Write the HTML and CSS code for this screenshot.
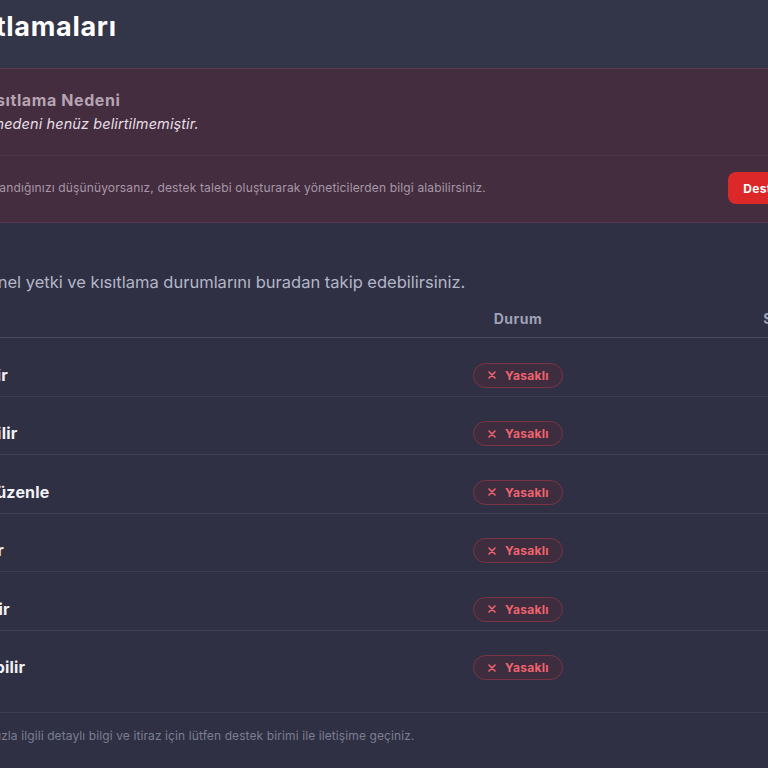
FILE: index.html
```html
<!DOCTYPE html>
<html lang="tr">

<head>
    <meta charset="UTF-8">
    <meta name="viewport" content="width=device-width, initial-scale=1.0">
    <title>Kanal Kısıtlamaları</title>
    <link rel="stylesheet" href="styles.css">
</head>

<body>
    <div class="page">
        <!-- baslik -->
        <div class="page-head">
            <h1>Kanal Kısıtlamaları</h1>
        </div>

        <!-- kisitlama uyarisi -->
        <div class="alert">
            <div class="alert-body">
                <svg class="alert-icon" width="30" height="30" viewBox="0 0 30 30">
                    <circle cx="15" cy="15" r="13" fill="none" stroke="#e05563" stroke-width="2" />
                    <path d="M15 8v9M15 21v1" stroke="#e05563" stroke-width="2.4" stroke-linecap="round" />
                </svg>
                <div>
                    <h2>Kanal Kısıtlama Nedeni</h2>
                    <p>Kısıtlama nedeni henüz belirtilmemiştir.</p>
                </div>
            </div>
            <div class="alert-foot">
                <p>Eğer haksız yere kısıtlandığınızı düşünüyorsanız, destek talebi oluşturarak yöneticilerden bilgi alabilirsiniz.</p>
                <button class="support">Destek Talebi Oluştur</button>
            </div>
        </div>

        <p class="lead">Profilinizin tüm genel yetki ve kısıtlama durumlarını buradan takip edebilirsiniz.</p>

        <div class="table-wrap">
            <table class="perms">
                <thead>
                    <tr>
                        <th class="col-name">Yetki</th>
                        <th class="col-state">Durum</th>
                        <th class="col-time">Süre</th>
                    </tr>
                </thead>
                <tbody>
                </tbody>
            </table>
        </div>

        <p class="note">Uygulanan kısıtlamalarınızla ilgili detaylı bilgi ve itiraz için lütfen destek birimi ile iletişime geçiniz.</p>
    </div>

    <script>
        var perms = [
            'Resim gönderebilir',
            'Etkinlik oluşturabilir',
            'Kanal bilgilerini düzenle',
            'Kanal oluşturabilir',
            'Medya yükleyebilir',
            'Etkinliklere katılabilir'
        ];

        //tabloyu doldur
        function showPerms() {
            var html = '';
            perms.forEach(function (item) {
                html += `<tr>
                    <td class="col-name">${item}</td>
                    <td class="col-state"><span class="badge"><svg width="8" height="8" viewBox="0 0 8 8"><path d="M1 1L7 7M7 1L1 7" stroke="currentColor" stroke-width="1.6" stroke-linecap="round"/></svg>Yasaklı</span></td>
                    <td class="col-time"></td>
                </tr>`;
            });
            get('.perms tbody').innerHTML = html;
        }

        showPerms();

        function get(sel) {
            return document.querySelector(sel);
        }
    </script>
</body>

</html>
```

FILE: styles.css
```css
* {
    margin: 0;
    padding: 0;
    box-sizing: border-box;
}

body {
    background-color: #2f3043;
    font-family: Inter, "Noto Sans", sans-serif;
    overflow: hidden;
}

.page {
    width: 1104px;
    margin-left: -142px;
}

.page-head {
    height: 68px;
    padding-top: 11px;
    background-color: #333549;
    margin-right: -200px;
}

.page-head h1 {
    font-size: 27px;
    line-height: 32px;
    font-weight: 700;
    letter-spacing: 0.7px;
    color: #ffffff;
}

/* uyari kutusu */
.alert {
    background-color: #432d3e;
    border: 1px solid #5a394c;
    border-radius: 12px;
}

.alert-body {
    display: flex;
    align-items: flex-start;
    gap: 16px;
    padding: 20px 24px 21px 22px;
}

.alert-icon {
    flex: 0 0 30px;
    margin-top: 8px;
}

.alert-body h2 {
    font-size: 16px;
    line-height: 22px;
    font-weight: 700;
    letter-spacing: 0.6px;
    color: #b6a4b3;
}

.alert-body p {
    margin-top: 3px;
    font-size: 14.5px;
    line-height: 20px;
    font-style: italic;
    letter-spacing: 0.1px;
    color: #e6dee5;
}

.alert-foot {
    display: flex;
    align-items: center;
    justify-content: space-between;
    border-top: 1px solid #54364a;
    padding: 16px 71px 18px 14px;
}

.alert-foot p {
    font-size: 12px;
    line-height: 16px;
    letter-spacing: 0.15px;
    color: #a897a8;
}

.support {
    height: 32px;
    padding: 0 15px;
    border: none;
    border-radius: 8px;
    background-color: #dc2828;
    color: #fff;
    font-family: inherit;
    font-size: 12px;
    font-weight: 700;
    letter-spacing: 0.3px;
}

.lead {
    margin-top: 47px;
    font-size: 16.5px;
    line-height: 24px;
    color: #b3b6c8;
}

/* tablo */
.table-wrap {
    margin-top: 5px;
    padding-bottom: 24px;
    border-bottom: 1px solid #3c3e53;
}

.perms {
    width: 100%;
    table-layout: fixed;
    border-collapse: collapse;
}

.perms th {
    padding: 11px 0 9px;
    font-size: 14px;
    line-height: 18px;
    font-weight: 700;
    letter-spacing: 0.5px;
    color: #9ea2b8;
    border-bottom: 1px solid #474a5f;
}

.perms td {
    padding: 24.5px 0 8px;
    height: 57.5px;
    border-bottom: 1px solid #3b3d52;
    vertical-align: middle;
}

.perms tbody tr:last-child td {
    border-bottom: none;
}

.col-name {
    width: 580px;
    text-align: left;
}

td.col-name {
    font-size: 16px;
    line-height: 25px;
    font-weight: 700;
    letter-spacing: 0.2px;
    color: #f1f1f6;
}

.col-state {
    width: 160px;
    text-align: center;
}

.col-time {
    text-align: center;
}

.badge {
    display: inline-flex;
    align-items: center;
    gap: 9px;
    height: 25px;
    padding: 0 13px 0 14px;
    border: 1px solid #7a3446;
    border-radius: 13px;
    background-color: #3d2d3f;
    color: #f0636f;
    font-size: 12px;
    font-weight: 700;
    letter-spacing: 0.3px;
}

.note {
    padding-top: 15px;
    font-size: 12px;
    line-height: 16px;
    letter-spacing: 0.1px;
    color: #7b7e92;
}
```
